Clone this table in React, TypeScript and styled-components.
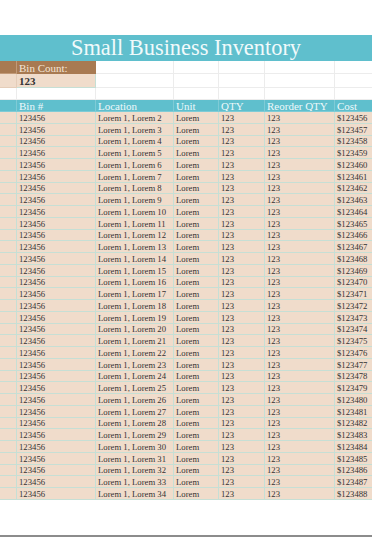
import React from "react";
import styled, { createGlobalStyle } from "styled-components";

const GlobalStyle = createGlobalStyle`
  html, body {
    margin: 0;
    padding: 0;
    background: #ffffff;
  }
  body {
    font-family: "Liberation Serif", "DejaVu Serif", serif;
    color: #363636;
  }
`;

const COLS = "17px 79px 78px 45px 46px 70px 37px";

const Sheet = styled.div`
  width: 372px;
  height: 537px;
  display: flex;
  flex-direction: column;
  overflow: hidden;
`;

const TopGap = styled.div`
  height: 35px;
`;

const TitleBand = styled.div`
  height: 26px;
  background: #5fbfcd;
  color: #f1fafb;
  font-size: 22.4px;
  line-height: 26px;
  text-align: center;
`;

const Row = styled.div<{ $h: number }>`
  display: grid;
  grid-template-columns: ${COLS};
  height: ${(p) => p.$h}px;
`;

const Cell = styled.div<{ $bg: string; $line: string; $color?: string; $size?: number; $bold?: boolean }>`
  background: ${(p) => p.$bg};
  border-right: 1px solid ${(p) => p.$line};
  border-bottom: 1px solid ${(p) => p.$line};
  color: ${(p) => p.$color || "#333333"};
  font-size: ${(p) => p.$size || 8.7}px;
  font-weight: ${(p) => (p.$bold ? 700 : 400)};
  padding-left: 2px;
  padding-top: 1px;
  white-space: nowrap;
  overflow: hidden;
  display: flex;
  align-items: center;
  box-sizing: border-box;
  &:last-child {
    border-right: none;
  }
`;

const Footer = styled.div`
  flex: 1;
  display: flex;
  flex-direction: column;
  justify-content: flex-end;
`;

const BottomRule = styled.div`
  height: 2px;
  background: #8c8c8c;
`;

const TEAL = "#5fbfcd";
const BROWN = "#a87a52";
const PEACH = "#f0dccb";
const DATA_LINE = "#c6dfd5";
const WHITE_LINE = "#ececec";

const headers = ["", "Bin #", "Location", "Unit", "QTY", "Reorder QTY", "Cost"];

const rows = Array.from({ length: 33 }, (_, i) => [
  "",
  "123456",
  `Lorem 1, Lorem ${i + 2}`,
  "Lorem",
  "123",
  "123",
  `$${123456 + i}`,
]);

const WhiteCells = () => (
  <>
    {[0, 1, 2, 3, 4].map((k) => (
      <Cell key={k} $bg="#ffffff" $line={WHITE_LINE} />
    ))}
  </>
);

export default function App() {
  return (
    <Sheet>
      <GlobalStyle />
      <TopGap />
      <TitleBand>Small Business Inventory</TitleBand>
      <Row $h={13}>
        <Cell $bg={BROWN} $line="#c29a78" />
        <Cell $bg={BROWN} $line={BROWN} $color="#f5e6d6" $size={11}>
          Bin Count:
        </Cell>
        <WhiteCells />
      </Row>
      <Row $h={14}>
        <Cell $bg={PEACH} $line="#e4cdb9" />
        <Cell $bg={PEACH} $line={DATA_LINE} $size={11} $bold>
          123
        </Cell>
        <WhiteCells />
      </Row>
      <Row $h={12}>
        <Cell $bg="#ffffff" $line={WHITE_LINE} />
        <Cell $bg="#ffffff" $line={WHITE_LINE} />
        <WhiteCells />
      </Row>
      <Row $h={12}>
        {headers.map((t, k) => (
          <Cell key={k} $bg={TEAL} $line="#7fcbd6" $color="#eef9fb" $size={11}>
            {t}
          </Cell>
        ))}
      </Row>
      {rows.map((r, i) => (
        <Row key={i} $h={11.76}>
          {r.map((t, k) => (
            <Cell key={k} $bg={PEACH} $line={DATA_LINE}>
              {t}
            </Cell>
          ))}
        </Row>
      ))}
      <Footer>
        <BottomRule />
      </Footer>
    </Sheet>
  );
}
